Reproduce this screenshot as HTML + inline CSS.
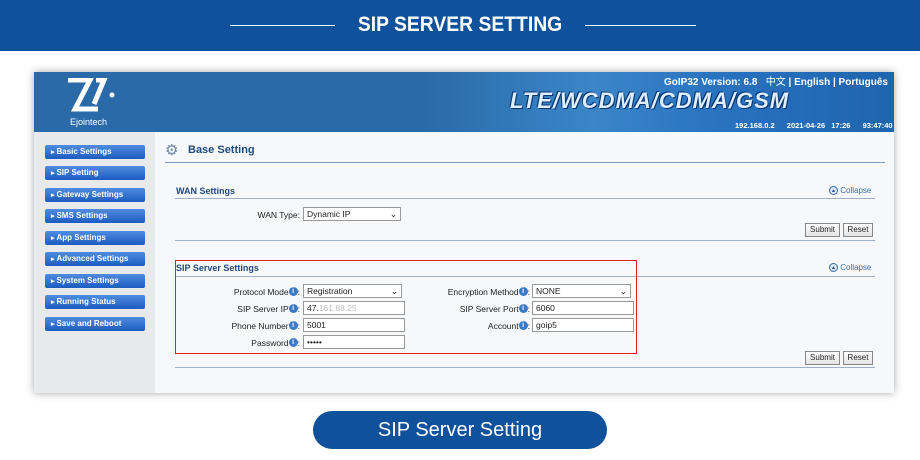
<!DOCTYPE html>
<html><head><style>
*{margin:0;padding:0;box-sizing:border-box}
body{width:920px;height:460px;background:#fff;position:relative;overflow:hidden;font-family:"Liberation Sans",Arial,sans-serif}
.a{position:absolute}
.top{left:0;top:0;width:920px;height:51px;background:#0f519a}
.t{color:#fff;font-weight:bold;font-size:21px;top:13px;left:0;width:920px;text-align:center;transform:scaleX(.92)}
.ln{height:1px;background:#fff;top:25px}
.shot{left:34px;top:72px;width:860px;height:321px;background:#f7f8f9;box-shadow:0 0 8px rgba(0,0,0,.35)}
.hdr{left:34px;top:72px;width:860px;height:60px;background:linear-gradient(90deg,#2a6aa8 0%,#2a6aa8 45%,#3a86c8 65%,#2872c0 80%,#1f64ae 100%)}
.side{left:34px;top:132px;width:121px;height:261px;background:#e8e9eb}
.btn{left:45px;width:100px;height:14px;background:linear-gradient(#4f8ce0,#1c5cc0);border-radius:2px;color:#fff;font-size:8px;font-weight:bold;line-height:14px;padding-left:6px}
.btn:before{content:"▸ ";font-size:7px}
.lbl{font-size:8.5px;color:#222;text-align:right}
.in{height:14px;border:1px solid #999;background:#fff;font-size:8.5px;line-height:12px;padding-left:3px;color:#222}
.sec{font-size:9px;font-weight:bold;color:#1e4a7e}
.hl{height:1px;background:#9db0c8}
.sb{height:14px;border:1px solid #888;background:linear-gradient(#fdfdfd,#e4e4e4);font-size:8px;line-height:12px;text-align:center;color:#222}
.col{font-size:8px;color:#3a6ea8}
.i{display:inline-block;width:9px;height:9px;border-radius:50%;background:#3a78c8;color:#fff;font-size:7px;line-height:9px;text-align:center;font-weight:bold;vertical-align:top}
</style></head><body>
<div class="a top"></div>
<div class="a ln" style="left:230px;width:105px"></div>
<div class="a ln" style="left:585px;width:111px"></div>
<div class="a t">SIP SERVER SETTING</div>

<div class="a shot"></div>
<div class="a hdr"></div>
<svg class="a" style="left:66px;top:78px" width="56" height="36"><path d="M2 2H24L9 31H32" stroke="#fff" stroke-width="5" fill="none"/><path d="M30 2H38L28 26" stroke="#fff" stroke-width="5" fill="none"/><circle cx="46" cy="17" r="2.5" fill="#fff"/></svg>
<div class="a" style="left:70px;top:117px;color:#fff;font-size:9px">Ejointech</div>
<div class="a" style="left:664px;top:73px;color:#fff;font-size:10px;font-weight:bold;white-space:nowrap">GoIP32 Version: 6.8 &nbsp;&nbsp;<span style="font-weight:normal;font-family:'Liberation Sans','Noto Sans CJK SC',sans-serif">中文</span> | English | Português</div>
<div class="a" style="left:510px;top:88px;color:#dceeff;font-size:22px;font-weight:bold;font-style:italic;letter-spacing:1px;text-shadow:1px 1px 0 #0a3570,-1px -1px 0 #0a3570">LTE/WCDMA/CDMA/GSM</div>
<div class="a" style="left:735px;top:121px;color:#fff;font-size:7.5px;font-weight:bold;word-spacing:4px">192.168.0.2 &nbsp;2021-04-26 17:26 &nbsp;93:47:40</div>

<div class="a side"></div>
<div class="a btn" style="top:145px">Basic Settings</div>
<div class="a btn" style="top:166px">SIP Setting</div>
<div class="a btn" style="top:188px">Gateway Settings</div>
<div class="a btn" style="top:209px">SMS Settings</div>
<div class="a btn" style="top:231px">App Settings</div>
<div class="a btn" style="top:252px">Advanced Settings</div>
<div class="a btn" style="top:274px">System Settings</div>
<div class="a btn" style="top:295px">Running Status</div>
<div class="a btn" style="top:317px">Save and Reboot</div>

<div class="a" style="left:165px;top:141px;font-size:15px;color:#6a86a8">⚙</div>
<div class="a" style="left:188px;top:144px;font-size:11px;font-weight:bold;color:#1e4a7e">Base Setting</div>
<div class="a hl" style="left:165px;top:162px;width:720px;background:#7f9ab8"></div>

<div class="a sec" style="left:176px;top:186px">WAN Settings</div>
<div class="a col" style="left:829px;top:186px"><span class="i" style="background:#dbe6f3;color:#1e4a7e;border:1px solid #3a6ea8;font-size:5px">▲</span> Collapse</div>
<div class="a hl" style="left:175px;top:198px;width:700px"></div>
<div class="a lbl" style="left:220px;top:210px;width:80px">WAN Type:</div>
<div class="a in" style="left:303px;top:207px;width:98px">Dynamic IP<span style="float:right;padding-right:3px">⌄</span></div>
<div class="a sb" style="left:805px;top:223px;width:35px">Submit</div>
<div class="a sb" style="left:843px;top:223px;width:30px">Reset</div>
<div class="a hl" style="left:175px;top:240px;width:700px"></div>

<div class="a sec" style="left:176px;top:263px">SIP Server Settings</div>
<div class="a col" style="left:829px;top:263px"><span class="i" style="background:#dbe6f3;color:#1e4a7e;border:1px solid #3a6ea8;font-size:5px">▲</span> Collapse</div>
<div class="a hl" style="left:175px;top:276px;width:700px"></div>
<div class="a" style="left:175px;top:260px;width:462px;height:94px;border:1.5px solid #e02020"></div>

<div class="a lbl" style="left:190px;top:287px;width:110px">Protocol Mode<span class="i">i</span>:</div>
<div class="a in" style="left:303px;top:284px;width:99px">Registration<span style="float:right;padding-right:3px">⌄</span></div>
<div class="a lbl" style="left:190px;top:304px;width:110px">SIP Server IP<span class="i">i</span>:</div>
<div class="a in" style="left:303px;top:301px;width:102px">47.<span style="color:#bbb">161.88.25</span></div>
<div class="a lbl" style="left:190px;top:321px;width:110px">Phone Number<span class="i">i</span>:</div>
<div class="a in" style="left:303px;top:318px;width:102px">5001</div>
<div class="a lbl" style="left:190px;top:338px;width:110px">Password<span class="i">i</span>:</div>
<div class="a in" style="left:303px;top:335px;width:102px">•••••</div>

<div class="a lbl" style="left:410px;top:287px;width:120px">Encryption Method<span class="i">i</span>:</div>
<div class="a in" style="left:532px;top:284px;width:99px">NONE<span style="float:right;padding-right:3px">⌄</span></div>
<div class="a lbl" style="left:410px;top:304px;width:120px">SIP Server Port<span class="i">i</span>:</div>
<div class="a in" style="left:532px;top:301px;width:102px">6060</div>
<div class="a lbl" style="left:410px;top:321px;width:120px">Account<span class="i">i</span>:</div>
<div class="a in" style="left:532px;top:318px;width:102px">goip5</div>

<div class="a sb" style="left:805px;top:351px;width:35px">Submit</div>
<div class="a sb" style="left:843px;top:351px;width:30px">Reset</div>
<div class="a hl" style="left:175px;top:367px;width:700px"></div>

<div class="a" style="left:313px;top:411px;width:294px;height:38px;border-radius:19px;background:#0f519a;color:#fff;font-size:20px;text-align:center;line-height:38px">SIP Server Setting</div>
</body></html>
